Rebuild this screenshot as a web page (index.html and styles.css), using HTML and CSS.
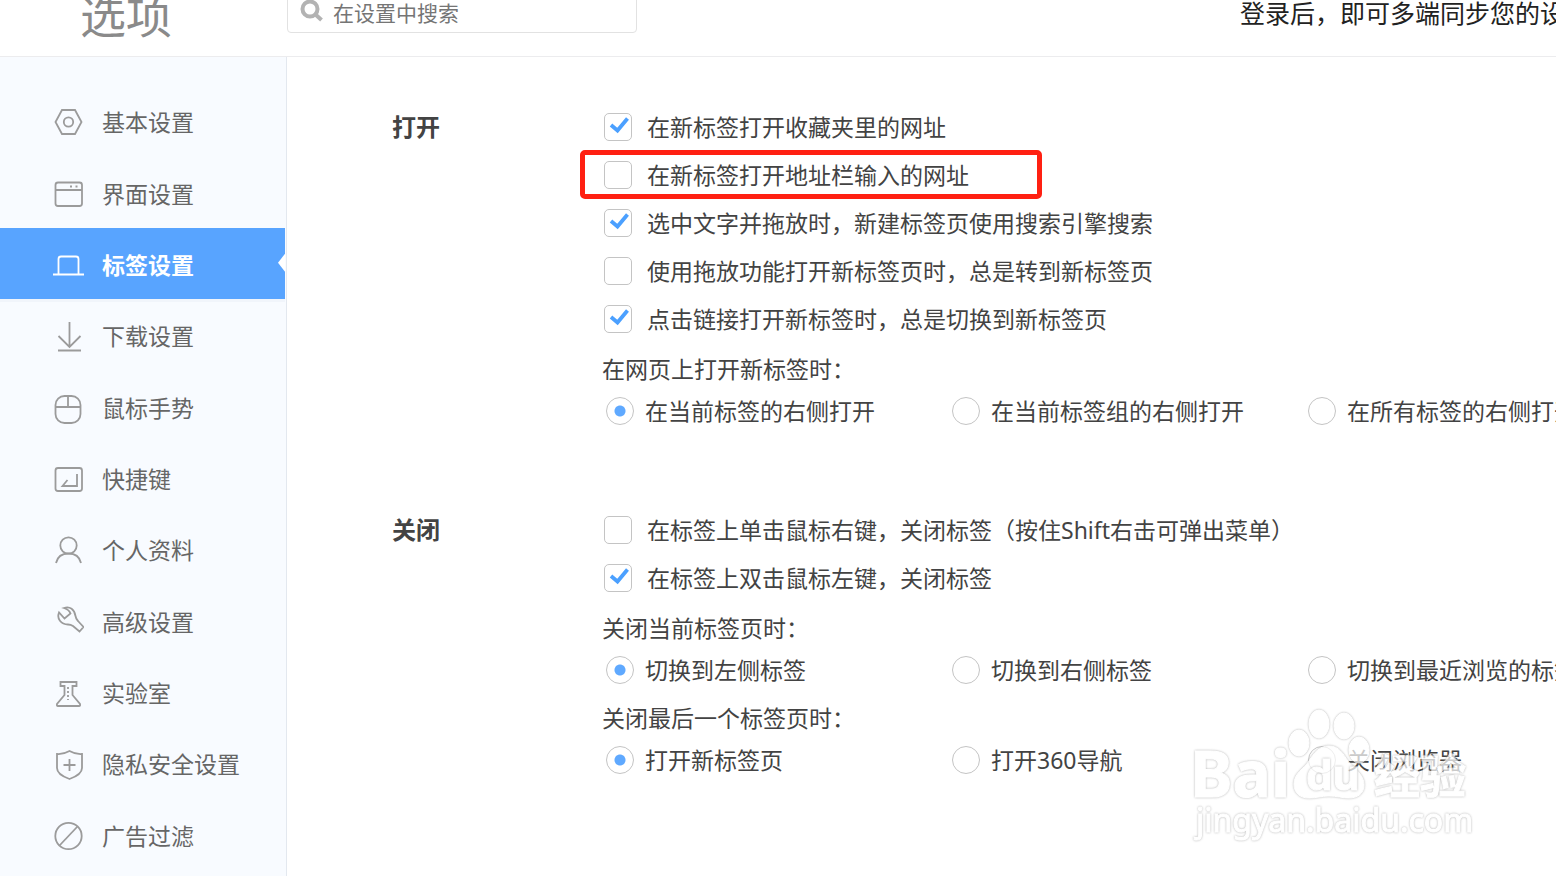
FILE: index.html
```html
<!DOCTYPE html>
<html lang="zh-CN">
<head>
<meta charset="utf-8">
<title>选项</title>
<link rel="stylesheet" href="styles.css">
</head>
<body>
<div class="page">
  <header class="topbar">
    <h1 class="title">选项</h1>
    <label class="search">
      <svg class="search-icon" viewBox="0 0 24 24" aria-hidden="true"><circle cx="10" cy="10" r="7.5"/><path d="M15.5 15.5 21.500 21"/></svg>
      <input class="search-input" type="text" placeholder="在设置中搜索" aria-label="在设置中搜索">
    </label>
    <p class="sync">登录后，即可多端同步您的设置</p>
  </header>
  <div class="body">
    <nav class="sidebar">
      <a class="item" href="#basic"><svg class="icon" viewBox="0 0 32 32"><path d="M10 4h13l6.500 12-6.500 12H10L3.500 16z"/><circle cx="16.500" cy="16" r="4.700"/></svg>基本设置</a>
      <a class="item" href="#ui"><svg class="icon" viewBox="0 0 32 32"><rect x="3.500" y="4.500" width="26.500" height="23.500" rx="2.500"/><path d="M3.500 12H30M18 8.500h2M23.500 8.500h2"/></svg>界面设置</a>
      <a class="item active" href="#tabs" aria-current="page"><svg class="icon" viewBox="0 0 32 32"><path d="M1 25.500h31M6.500 25V10q0-2.500 2.500-2.500h15q2.500 0 2.500 2.500v15"/></svg>标签设置</a>
      <a class="item" href="#download"><svg class="icon" viewBox="0 0 32 32"><path d="M17.500 2v25M6.500 16l11 11 11-11M6 30.500h23"/></svg>下载设置</a>
      <a class="item" href="#mouse"><svg class="icon" viewBox="0 0 32 32"><rect x="3.500" y="4" width="25" height="27" rx="9"/><path d="M3.500 15h25M16 4v11"/></svg>鼠标手势</a>
      <a class="item" href="#keys"><svg class="icon" viewBox="0 0 32 32"><rect x="3.500" y="5" width="26.500" height="23" rx="2.500"/><path d="M25 11v12H10.500l5-6"/></svg>快捷键</a>
      <a class="item" href="#profile"><svg class="icon" viewBox="0 0 32 32"><circle cx="16.500" cy="11.500" r="8.200"/><path d="M4 29c1.500-6.500 6.500-9.500 12.500-9.500S27.500 22.500 29 29"/></svg>个人资料</a>
      <a class="item" href="#advanced"><svg class="icon" viewBox="0 0 32 32"><path d="M12 2c6-2 10.500 1.500 11.500 8 .3 2 1 3.500 2.500 5l5.500 6-4 4.500-6.500-5.500c-1.500-1-3-1.500-5-1.500C9 18.500 4.500 12.500 7 6.500l5.500 6 6-5c-1-3-3.500-4.500-6.500-5.500z"/></svg>高级设置</a>
      <a class="item" href="#lab"><svg class="icon" viewBox="0 0 32 32"><path d="M8.500 5h16v4h-4v9l7.500 9q.500 2-1 2H6q-1.500 0-1-2l7.500-9V9h-4z"/><path stroke-dasharray="2 2" d="M16 10v13"/></svg>实验室</a>
      <a class="item" href="#privacy"><svg class="icon" viewBox="0 0 32 32"><path d="M17.500 3q6 3.500 12.500 3v14c0 5-5.500 8.500-12.500 11C10.500 28.500 5 25 5 20V6q6.500.500 12.500-3zM17.500 11v12M11.500 17h12"/></svg>隐私安全设置</a>
      <a class="item" href="#ads"><svg class="icon" viewBox="0 0 32 32"><circle cx="16.500" cy="16" r="13.200"/><path d="M7.500 25.500l18-19"/></svg>广告过滤</a>
    </nav>
    <main class="content">
      <section class="section">
        <h2 class="heading">打开</h2>
        <div class="options">
          <label class="check"><input class="box" type="checkbox" checked>在新标签打开收藏夹里的网址</label>
          <label class="check marked"><input class="box" type="checkbox">在新标签打开地址栏输入的网址</label>
          <label class="check"><input class="box" type="checkbox" checked>选中文字并拖放时，新建标签页使用搜索引擎搜索</label>
          <label class="check"><input class="box" type="checkbox">使用拖放功能打开新标签页时，总是转到新标签页</label>
          <label class="check"><input class="box" type="checkbox" checked>点击链接打开新标签时，总是切换到新标签页</label>
          <fieldset class="group">
            <legend class="legend">在网页上打开新标签时：</legend>
            <div class="radios">
              <label class="radio"><input class="dot" type="radio" name="open" checked>在当前标签的右侧打开</label>
              <label class="radio"><input class="dot" type="radio" name="open">在当前标签组的右侧打开</label>
              <label class="radio"><input class="dot" type="radio" name="open">在所有标签的右侧打开</label>
            </div>
          </fieldset>
        </div>
      </section>
      <section class="section">
        <h2 class="heading">关闭</h2>
        <div class="options">
          <label class="check"><input class="box" type="checkbox">在标签上单击鼠标右键，关闭标签（按住Shift右击可弹出菜单）</label>
          <label class="check"><input class="box" type="checkbox" checked>在标签上双击鼠标左键，关闭标签</label>
          <fieldset class="group">
            <legend class="legend">关闭当前标签页时：</legend>
            <div class="radios">
              <label class="radio"><input class="dot" type="radio" name="close" checked>切换到左侧标签</label>
              <label class="radio"><input class="dot" type="radio" name="close">切换到右侧标签</label>
              <label class="radio"><input class="dot" type="radio" name="close">切换到最近浏览的标签</label>
            </div>
          </fieldset>
          <fieldset class="group">
            <legend class="legend">关闭最后一个标签页时：</legend>
            <div class="radios">
              <label class="radio"><input class="dot" type="radio" name="last" checked>打开新标签页</label>
              <label class="radio"><input class="dot" type="radio" name="last">打开360导航</label>
              <label class="radio"><input class="dot" type="radio" name="last">关闭浏览器</label>
            </div>
          </fieldset>
        </div>
      </section>
      <svg class="watermark" viewBox="0 0 290 145">
        <g class="wm-shape">
          <ellipse cx="109" cy="38" rx="10" ry="13"/>
          <ellipse cx="129" cy="19" rx="10" ry="14"/>
          <ellipse cx="154" cy="21" rx="10" ry="13"/>
          <ellipse cx="169" cy="45" rx="10" ry="13"/>
        </g>
        <path class="wm-shape" d="M139 41c10 0 14 8 19 15 6 8 16 13 16 24 0 9-7 13-15 13-7 0-12-2-20-2s-12 2-20 2c-9 0-15-5-15-14 0-11 10-15 15-23 5-8 10-15 20-15z"/>
        <text class="wm-shape wm-bai" x="0" y="92">Bai</text>
        <text class="wm-shape wm-cn" x="184" y="88">经验</text>
        <text class="wm-shape wm-url" x="6" y="127">jingyan.baidu.com</text>
        <text class="wm-shape wm-du" x="116" y="85">du</text>
      </svg>
    </main>
  </div>
</div>
</body>
</html>
```
FILE: styles.css
```css
* { box-sizing: border-box; }
body {
  margin: 0;
  overflow: hidden;
  background: #fff;
  color: #434343;
  font: 23px/28px "Noto Sans", "Noto Sans CJK SC", sans-serif;
}
.page { display: flex; flex-direction: column; min-height: 100vh; }

.topbar {
  display: flex;
  align-items: flex-end;
  height: 57px;
  padding: 0 0 23px 80px;
  border-bottom: 1px solid #ececee;
  white-space: nowrap;
  overflow: hidden;
}
.title {
  flex: 0 0 207px;
  margin: 0;
  color: #8a8a8a;
  font-size: 46px;
  line-height: 36px;
  font-weight: 400;
}
.search {
  display: flex;
  flex: 0 0 350px;
  min-width: 0;
  align-items: center;
  gap: 9px;
  height: 44px;
  padding: 0 12px;
  border: 1px solid #e2e2e2;
  border-radius: 4px;
}
.search-icon {
  flex: none;
  width: 24px;
  height: 24px;
  fill: none;
  stroke: #b3b3b3;
  stroke-width: 4;
}
.search-input {
  flex: 1;
  width: 100%;
  min-width: 0;
  padding: 4px 0 0;
  border: 0;
  outline: 0;
  background: none;
  color: #757575;
  font: inherit;
  font-size: 21px;
}
.search-input::placeholder { color: #757575; }
.sync { margin: 0 0 6px 603px; color: #222; font-size: 25px; }

.body { display: flex; flex: 1; }
.sidebar {
  display: grid;
  flex: 0 0 287px;
  grid-auto-rows: 1fr;
  padding: 28px 1px 6px 0;
  border-right: 1px solid #e3e8ef;
  background: #f8fbff;
}
.item {
  position: relative;
  display: flex;
  align-items: center;
  gap: 18px;
  padding: 3px 0 0 52px;
  color: #666;
  text-decoration: none;
}
.icon {
  width: 32px;
  height: 32px;
  fill: none;
  stroke: #9b9b9b;
  stroke-width: 1.8;
}
.active {
  background: #58a4ff;
  box-shadow: 0 3px 0 #f1f5fb;
  color: #fff;
  font-weight: 700;
}
.active .icon { stroke: #fff; }
.active::after {
  content: "";
  position: absolute;
  top: 26px;
  right: 0;
  width: 7px;
  height: 18px;
  background: #fff;
  clip-path: polygon(0 50%, 100% 0, 100% 100%);
}

.content {
  position: relative;
  display: flex;
  flex: 1;
  flex-direction: column;
  gap: 91px;
  min-width: 0;
  padding: 56px 0 0 105px;
  overflow: hidden;
  white-space: nowrap;
}
.section { display: grid; grid-template-columns: 210px 1fr; }
.heading { margin: 0; font-size: 24px; line-height: 28px; }
.options { display: flex; flex-direction: column; align-items: flex-start; gap: 20px; }
.check {
  position: relative;
  display: flex;
  align-items: center;
  gap: 15px;
  padding-left: 2px;
}
.marked { padding-right: 73px; }
.marked::before {
  content: "";
  position: absolute;
  inset: -11px 0 -10px -22px;
  border: 5px solid #ff2012;
  border-radius: 5px;
  pointer-events: none;
}
.box, .dot {
  flex: none;
  appearance: none;
  width: 28px;
  height: 28px;
  margin: 0;
  border: 1px solid #c4c4c4;
  background: #fff;
}
.box { border-radius: 5px; }
.box:checked {
  background: url("data:image/svg+xml,%3Csvg xmlns='http://www.w3.org/2000/svg' viewBox='0 0 26 26'%3E%3Cpath d='M6 11l6.500 5.500L22.500 4.500' fill='none' stroke='%234ba0ff' stroke-width='3.800'/%3E%3C/svg%3E");
}
.dot { border-radius: 50%; }
.dot:checked { background: radial-gradient(circle, #5fa9ff 5px, #fff 6px); }
.group { min-width: 0; margin: 0; padding: 0; border: 0; }
.check + .group { margin-top: 2px; }
.legend { margin-bottom: 14px; padding: 0; }
.radios {
  display: grid;
  grid-template-columns: 346px 356px auto;
  padding-left: 4px;
}
.radio { display: flex; align-items: center; gap: 11px; }

.watermark {
  position: absolute;
  right: 76px;
  bottom: 26px;
  width: 290px;
  height: 145px;
  opacity: 0.72;
  pointer-events: none;
}
.wm-shape {
  fill: #fff;
  stroke: #fff;
  stroke-width: 1;
  filter: drop-shadow(0 0 1px #999);
}
.wm-bai { font: 700 64px "Noto Sans", sans-serif; }
.wm-cn { font: 700 46px "Noto Sans CJK SC", sans-serif; }
.wm-url { font: 32px "Noto Sans", sans-serif; }
.wm-du { font: 700 42px "Noto Sans", sans-serif; }
```
